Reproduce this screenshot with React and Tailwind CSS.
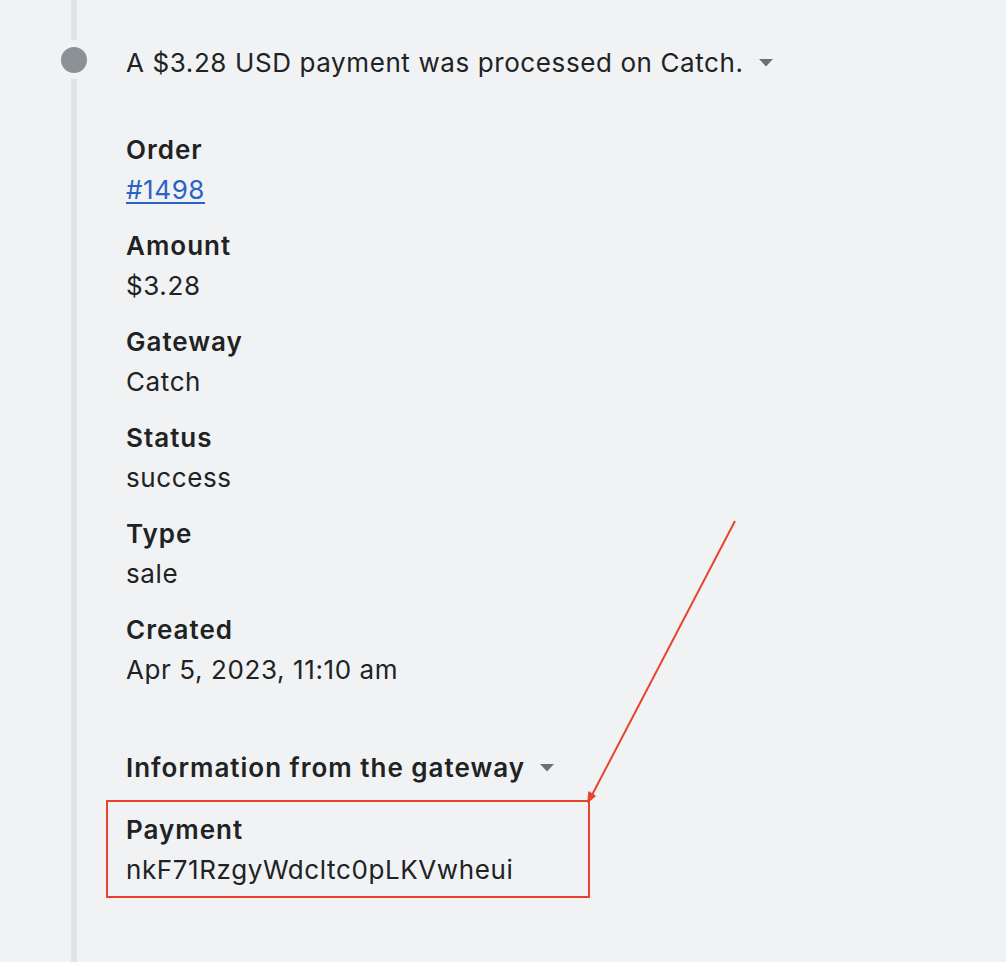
import React from "react";

const Caret = ({ className = "" }) => (
  <svg width="16" height="9" viewBox="0 0 16 9" className={className}>
    <path d="M1 1 L15 1 L8 8.5 Z" fill="#6d7175" />
  </svg>
);

const Field = ({ label, children }) => (
  <div className="flex flex-col">
    <div className="h-[40px] leading-[40px] font-semibold tracking-[1px]">{label}</div>
    <div className="h-[40px] leading-[40px]">{children}</div>
  </div>
);

export default function App() {
  return (
    <div
      className="relative flex min-h-[962px] w-full bg-[#f1f2f4] text-[26px] tracking-[0.6px] text-[#202223]"
      style={{ fontFamily: "Inter, 'Noto Sans', sans-serif" }}
    >
      <div className="ml-[48px] flex w-[52px] flex-col items-center">
        <div className="h-[40px] w-[6px] bg-[#e1e3e6]" />
        <div className="mt-[7px] h-[26px] w-[26px] rounded-full bg-[#8c9196]" />
        <div className="mt-[6px] w-[6px] flex-1 bg-[#e1e3e6]" />
      </div>
      <div className="ml-[26px] flex flex-col pt-[42px]">
        <div className="flex h-[40px] items-center gap-[14px]">
          <span>A $3.28 USD payment was processed on Catch.</span>
          <Caret />
        </div>
        <div className="mt-[48px] flex flex-col gap-[16px]">
          <Field label="Order">
            <a className="text-[#2c62c4] underline underline-offset-[3px]" href="#">
              #1498
            </a>
          </Field>
          <Field label="Amount">$3.28</Field>
          <Field label="Gateway">Catch</Field>
          <Field label="Status">success</Field>
          <Field label="Type">sale</Field>
          <Field label="Created">Apr 5, 2023, 11:10 am</Field>
        </div>
        <div className="mt-[57px] flex h-[40px] items-center gap-[14px] font-semibold tracking-[1px]">
          <span>Information from the gateway</span>
          <Caret />
        </div>
        <div className="-ml-[20px] mt-[13px] w-[484px] border-2 border-[#e8432d] pb-[6px] pl-[18px] pt-[8px]">
          <Field label="Payment">nkF71RzgyWdcltc0pLKVwheui</Field>
        </div>
      </div>
      <svg
        className="pointer-events-none absolute left-0 top-0"
        width="1006"
        height="962"
        viewBox="0 0 1006 962"
      >
        <line x1="735" y1="521" x2="592" y2="795" stroke="#e8432d" strokeWidth="2" />
        <path d="M588 802 L589 792 L595 796 Z" fill="#e8432d" stroke="#e8432d" strokeWidth="1.5" strokeLinejoin="round" />
      </svg>
    </div>
  );
}
